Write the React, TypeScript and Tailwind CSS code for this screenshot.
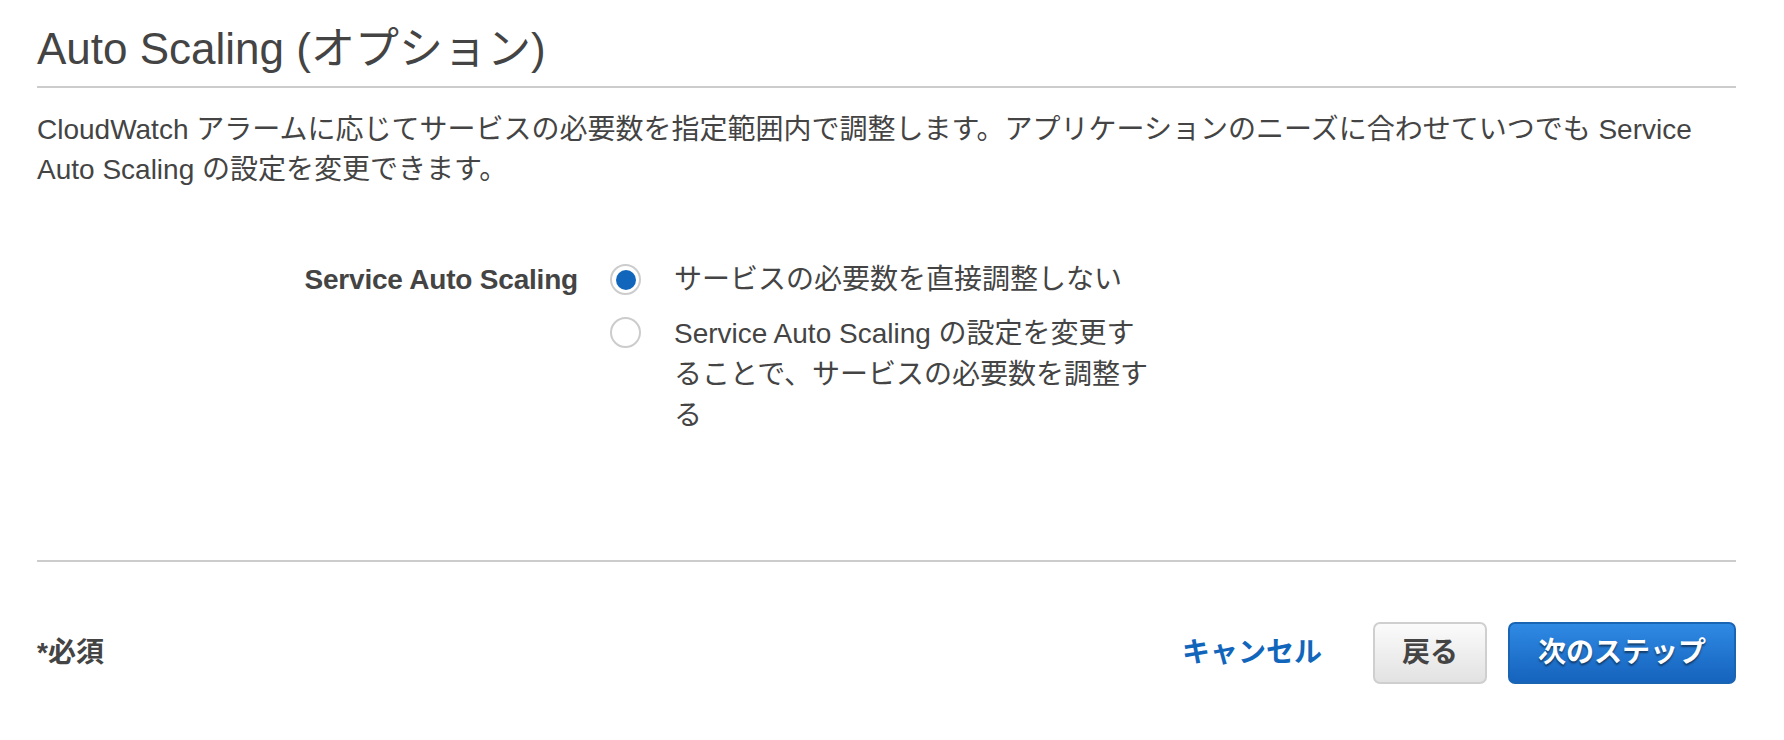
import { useState } from "react";

const options = [
  { id: "none", label: "サービスの必要数を直接調整しない" },
  {
    id: "configure",
    label: "Service Auto Scaling の設定を変更することで、サービスの必要数を調整する",
  },
];

function Radio({ checked }: { checked: boolean }) {
  return (
    <span className="mt-[4px] flex h-[31px] w-[31px] shrink-0 items-center justify-center rounded-full border-2 border-[#cccccc] bg-white">
      {checked && <span className="h-[20px] w-[20px] rounded-full bg-[#1166bb]"></span>}
    </span>
  );
}

export default function App() {
  const [selected, setSelected] = useState("none");

  return (
    <div className="min-h-screen bg-white pl-[37px] pr-[48px] pt-[23px] font-['Liberation_Sans','Noto_Sans_CJK_JP',sans-serif] text-[#444444]">
      {/* Header */}
      <h1 className="border-b-2 border-[#cccccc] pb-[11px] text-[44px] leading-[52px] font-normal">
        Auto Scaling (オプション)
      </h1>
      <p className="mt-[22px] text-[28px] leading-[40px]">
        CloudWatch アラームに応じてサービスの必要数を指定範囲内で調整します。アプリケーションのニーズに合わせていつでも Service Auto Scaling の設定を変更できます。
      </p>

      {/* Service Auto Scaling options */}
      <div className="mt-[70px] flex h-[302px] border-b-2 border-[#cccccc]">
        <div className="w-[541px] shrink-0 text-right text-[28px] leading-[40px] font-bold tracking-[-0.2px]">
          Service Auto Scaling
        </div>
        <div className="ml-[32px] flex flex-col gap-[13px]">
          {options.map((opt) => (
            <label
              key={opt.id}
              className="flex cursor-pointer items-start gap-[33px]"
              onClick={() => setSelected(opt.id)}
            >
              <Radio checked={selected === opt.id} />
              <span
                className={
                  opt.id === "none"
                    ? "w-[480px] text-[28px] leading-[40px]"
                    : "w-[480px] text-[28px] leading-[41px]"
                }
              >
                {opt.label}
              </span>
            </label>
          ))}
        </div>
      </div>

      {/* Footer */}
      <div className="mt-[60px] flex items-center">
        <span className="text-[28px] font-bold">*必須</span>
        <div className="ml-auto flex items-center">
          <a className="mr-[51px] cursor-pointer text-[28px] font-bold text-[#1166bb]">
            キャンセル
          </a>
          <button className="h-[62px] w-[114px] rounded-[7px] border-2 border-[#cfcfcf] bg-gradient-to-b from-[#fbfbfb] to-[#e2e2e2] text-[28px] font-bold text-[#444444]">
            戻る
          </button>
          <button className="ml-[21px] h-[62px] w-[228px] rounded-[7px] border-2 border-[#1a64b4] bg-gradient-to-b from-[#2f8ae4] to-[#1563bd] text-[28px] font-bold text-white [text-shadow:0_2px_2px_rgba(0,0,0,0.5)]">
            次のステップ
          </button>
        </div>
      </div>
    </div>
  );
}
